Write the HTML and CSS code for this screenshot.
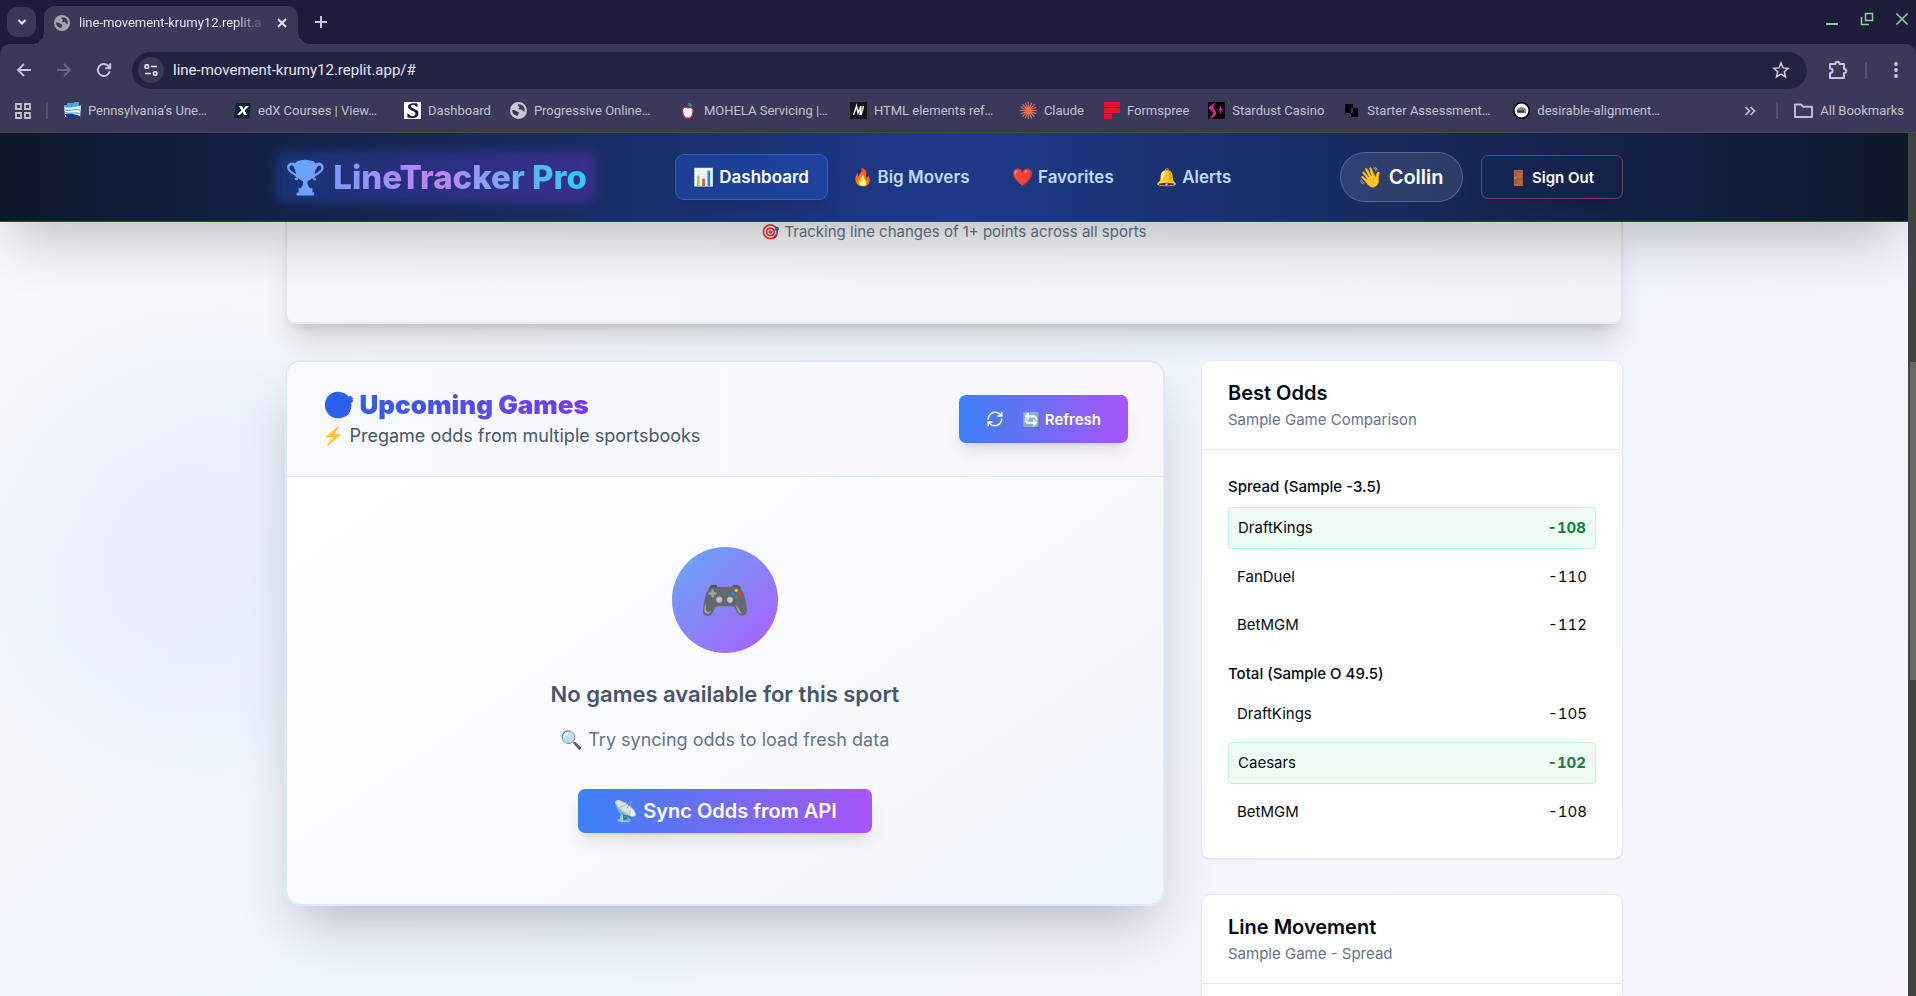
FILE: index.html
```html
<!DOCTYPE html>
<html lang="en">
<head>
<meta charset="utf-8">
<title>LineTracker Pro</title>
<link rel="stylesheet" href="styles.css">
</head>
<body>
<svg class="defs" aria-hidden="true">
  <symbol id="globe" viewBox="0 0 16 16"><circle cx="8" cy="8" r="8" fill="currentColor"/><path d="M2 7.500c2-.3 3.200.3 4.300 1.200 1 .7 2 .3 2 1.600 0 1-.8 1.200-1 2.700-3.200-.2-5.400-2.500-5.300-5.500zM8 2.200c-1 .8-.6 1.800.4 2 1.200.1.800 1.200 0 1.500-.9.400-.4 1.400.8 1.300 1.700-.2 2.600.4 2.900 1.300.3.700 1 .8 1.700.5C14.300 5 11.800 2 8 2.200z" fill="#3a3959"/></symbol>
</svg>
<header class="browser">
  <div class="tabstrip">
    <button class="tab-search" aria-label="Search tabs"><svg width="10" height="8" viewBox="0 0 10 8"><path d="M1.500 2 5 5.500 8.500 2" fill="none" stroke="#e4e3f5" stroke-width="2"/></svg></button>
    <div class="tab">
      <svg class="fav" width="16" height="16"><use href="#globe"/></svg>
      <span class="tab-title">line-movement-krumy12.replit.a</span>
      <button class="icon-btn" aria-label="Close tab"><svg width="10" height="10" viewBox="0 0 10 10"><path d="M1 1l8 8M9 1l-8 8" stroke="#e6e5f5" stroke-width="2"/></svg></button>
    </div>
    <button class="icon-btn new-tab" aria-label="New tab"><svg width="12" height="12" viewBox="0 0 12 12"><path d="M6 0v12M0 6h12" stroke="#c6c3ee" stroke-width="2"/></svg></button>
    <div class="window-controls">
      <button class="icon-btn" aria-label="Minimize"><svg width="14" height="14" viewBox="0 0 14 14"><path d="M1 12h12" stroke="#8fd19a" stroke-width="2"/></svg></button>
      <button class="icon-btn" aria-label="Restore"><svg width="14" height="14" viewBox="0 0 14 14"><path d="M5.500 1.500h7v7h-7zM1.500 5v7.500H9" fill="none" stroke="#8fd19a" stroke-width="1.500"/></svg></button>
      <button class="icon-btn" aria-label="Close"><svg width="14" height="14" viewBox="0 0 14 14"><path d="M1.500 1.500l11 11M12.500 1.500l-11 11" stroke="#8fd19a" stroke-width="1.600"/></svg></button>
    </div>
  </div>
  <div class="toolbar">
    <button class="icon-btn" aria-label="Back"><svg width="16" height="14" viewBox="0 0 16 14"><path d="M15 7H2M8 1 2 7l6 6" fill="none" stroke="#c6c3ee" stroke-width="1.800"/></svg></button>
    <button class="icon-btn" aria-label="Forward"><svg width="16" height="14" viewBox="0 0 16 14"><path d="M1 7h13M8 1l6 6-6 6" fill="none" stroke="#6b6a8d" stroke-width="1.800"/></svg></button>
    <button class="icon-btn" aria-label="Reload"><svg width="16" height="16" viewBox="0 0 16 16"><path d="M13.700 9.200A6 6 0 1 1 12.300 4L14 5.800M14.200 1.200v5H9.200" fill="none" stroke="#c6c3ee" stroke-width="1.900"/></svg></button>
    <div class="omnibox">
      <button class="site-info" aria-label="Site information"><svg width="14" height="12" viewBox="0 0 14 12"><g fill="none" stroke="#e4e3f5" stroke-width="1.600"><circle cx="2.800" cy="2.500" r="1.800"/><path d="M7 2.500h6M1 9.500h6"/><circle cx="11.200" cy="9.500" r="1.800"/></g></svg></button>
      <input class="url" type="text" aria-label="Address" value="line-movement-krumy12.replit.app/#">
      <button class="icon-btn" aria-label="Bookmark"><svg width="18" height="18" viewBox="0 0 18 18"><path d="M9 2l2 4.900 5.200.4-4 3.400 1.300 5.200L9 13.100l-4.500 2.800 1.300-5.200-4-3.400 5.200-.4z" fill="none" stroke="#d3d2e4" stroke-width="1.500"/></svg></button>
    </div>
    <button class="icon-btn" aria-label="Extensions"><svg width="20" height="20" viewBox="0 0 20 20"><path d="M2 4h5.500c0-3 4-3 4 0H16v5c3 0 3 4 0 4v5H2v-5c3.500 0 3.500-4.500 0-4.500z" fill="none" stroke="#c6c3ee" stroke-width="2" stroke-linejoin="round"/></svg></button>
    <span class="divider"></span>
    <button class="icon-btn" aria-label="Menu"><svg width="6" height="16" viewBox="0 0 6 16"><g fill="#c6c3ee"><circle cx="3" cy="2" r="1.900"/><circle cx="3" cy="8" r="1.900"/><circle cx="3" cy="14" r="1.900"/></g></svg></button>
  </div>
  <nav class="bookmarks" aria-label="Bookmarks">
    <button class="icon-btn apps" aria-label="Apps"><svg width="16" height="16" viewBox="0 0 16 16"><path d="M1 1h5v5H1zM10 1h5v5h-5zM1 10h5v5H1zM10 10h5v5h-5z" fill="none" stroke="#c3c2cf" stroke-width="1.800"/></svg></button>
    <span class="divider"></span>
    <a class="bm bm-long" href="#"><svg width="17" height="17" viewBox="0 0 17 17"><path d="M0 3h3V1h7V0h5v3h2l-1 14-5-1-10-1z" fill="#e9f3fb"/><path d="M0 3h3V1h7V0h5v3h2v1C11 4 6 7 0 5z" fill="#4aa3e0"/><path d="M1 8c5 2 9-2 15 0M1 10.500c5 2 9-1 15 1" stroke="#4f9cd6" fill="none"/><path d="M1 12c4 0 7-1 15 2v3L3 16z" fill="#173a86"/></svg><span>Pennsylvania’s Une…</span></a>
    <a class="bm bm-long" href="#"><svg width="17" height="17" viewBox="0 0 17 17"><path d="M2 1h15l-2 15H0z" fill="#02262b"/><path d="M5 4h3l1.200 3L12 4h3l-4.500 4.600L13 13h-3l-1.400-3L6 13H3l4.400-4.800z" fill="#fff"/></svg><span>edX Courses | View…</span></a>
    <a class="bm" href="#"><svg width="17" height="17" viewBox="0 0 17 17"><path d="M0 0h17v17H0z" fill="#fff"/><path d="M13.500 5V1.500c-5-1-9.500 0-9.500 3.300 0 4 7.500 3.500 7.500 7 0 2.800-4 3-5.500 1.400L3.500 11v4.500c6 1.200 11 .3 11-4.300 0-4.700-7.500-4.200-7.500-6.700C7 2.500 10 2.200 11.500 4z" fill="#1b1250"/></svg><span>Dashboard</span></a>
    <a class="bm bm-long" href="#"><svg class="fav-light" width="17" height="17"><use href="#globe"/></svg><span>Progressive Online…</span></a>
    <a class="bm bm-long" href="#"><svg width="17" height="17" viewBox="0 0 17 17"><path d="M8 6c-3-2-6-.5-5.500 3.500C3 13.500 5 17 8 15.800c3 1.200 4.600-2 5-6C13.200 6 11 4.500 8 6z" fill="#fff" stroke="#c32148" stroke-width="1.300"/><path d="M8 1.500c2-1 3.500.5 3.500 2C9.500 4.500 8.300 3.500 8 1.500zM9 5l4-1.500" fill="#1f9a75" stroke="#1f9a75"/></svg><span>MOHELA Servicing |…</span></a>
    <a class="bm bm-long" href="#"><svg width="17" height="17" viewBox="0 0 17 17"><path d="M0 0h17v17H0z" fill="#15141a"/><path d="M3.500 13 6.500 4 8 11l3-7-1 9M11 13l2.500-9" fill="none" stroke="#fff" stroke-width="1.400"/></svg><span>HTML elements ref…</span></a>
    <a class="bm" href="#"><svg width="17" height="17" viewBox="0 0 17 17"><path d="M8.500 0v17M0 8.500h17M2.500 2.500l12 12M14.500 2.500l-12 12M5.300.8l6.400 15.400M.8 11.700l15.400-6.400M11.700.8 5.300 16.200M.8 5.300l15.400 6.400" stroke="#d97757" stroke-width="1.200"/></svg><span>Claude</span></a>
    <a class="bm" href="#"><svg width="17" height="17" viewBox="0 0 17 17"><path d="M1 0h16v5H1zM1 6h16v5H1zM1 12h8v5H1z" fill="#e5122e"/></svg><span>Formspree</span></a>
    <a class="bm" href="#"><svg width="17" height="17" viewBox="0 0 17 17"><path d="M0 0h17v17H0z" fill="#000"/><path d="M8 0C4 3 1 4 1 6s4 3 4 5-2 4-4 6c4-1 7-3 7-6S4 7 5 5s2-3 3-5zM12.500 3l.8 4 3 .8-3 .8-.8 4.400-.8-4.400-3-.8 3-.8z" fill="#e0269b"/></svg><span>Stardust Casino</span></a>
    <a class="bm bm-long" href="#"><svg width="17" height="17" viewBox="0 0 17 17"><path d="M2 2h8v4h5v9H8v-4H2z" fill="#000"/><path d="M8 6h2v5H8z" fill="#3a3959"/></svg><span>Starter Assessment…</span></a>
    <a class="bm bm-long" href="#"><svg width="17" height="17" viewBox="0 0 17 17"><circle cx="8.500" cy="8.500" r="7.700" fill="#fff" stroke="#000" stroke-width="1.600"/><path d="M4 8c1-4 8-4 9 0v3H4z" fill="#888"/><path d="M4 8.500h7v2H4z" fill="#333"/></svg><span>desirable-alignment…</span></a>
    <button class="icon-btn more" aria-label="More bookmarks"><svg width="12" height="10" viewBox="0 0 12 10"><path d="M1.500 1l4 4-4 4M6.500 1l4 4-4 4" fill="none" stroke="#c3c2cf" stroke-width="1.700"/></svg></button>
    <span class="divider"></span>
    <a class="bm all" href="#"><svg width="19" height="15" viewBox="0 0 19 15"><path d="M1 1.500h6l2 2.200h9V14H1z" fill="none" stroke="#c3c2cf" stroke-width="1.900" stroke-linejoin="round"/></svg><span>All Bookmarks</span></a>
  </nav>
</header>

<div class="viewport">
  <div class="page">
    <header class="site-header">
      <div class="container header-row">
        <a class="logo" href="#"><span class="logo-text">🏆 LineTracker Pro</span></a>
        <nav class="site-nav" aria-label="Main">
          <a class="nav-link active" href="#">📊 Dashboard</a>
          <a class="nav-link" href="#">🔥 Big Movers</a>
          <a class="nav-link" href="#">❤️ Favorites</a>
          <a class="nav-link" href="#">🔔 Alerts</a>
        </nav>
        <div class="account">
          <span class="user">👋 Collin</span>
          <button class="sign-out">🚪 Sign Out</button>
        </div>
      </div>
    </header>
    <main class="container main">
      <section class="hero"><p>🎯 Tracking line changes of 1+ points across all sports</p></section>
      <div class="columns">
        <section class="games">
          <div class="games-head">
            <div>
              <h2 class="games-title">🎯 Upcoming Games</h2>
              <p class="games-sub">⚡ Pregame odds from multiple sportsbooks</p>
            </div>
            <button class="btn refresh">
              <svg width="18" height="18" viewBox="0 0 24 24" fill="none" stroke="#fff" stroke-width="2" stroke-linecap="round" stroke-linejoin="round"><path d="M3 12a9 9 0 0 1 9-9 9.750 9.750 0 0 1 6.740 2.740L21 8"/><path d="M21 3v5h-5"/><path d="M21 12a9 9 0 0 1-9 9 9.750 9.750 0 0 1-6.740-2.740L3 16"/><path d="M8 16H3v5"/></svg>
              <span>🔄 Refresh</span>
            </button>
          </div>
          <div class="empty">
            <div class="empty-icon"><span>🎮</span></div>
            <h3>No games available for this sport</h3>
            <p>🔍 Try syncing odds to load fresh data</p>
            <button class="btn sync">📡 Sync Odds from API</button>
          </div>
        </section>
        <aside class="side">
          <section class="card">
            <div class="card-head"><h3>Best Odds</h3><p>Sample Game Comparison</p></div>
            <div class="card-body">
              <div class="market">
                <h4>Spread (Sample -3.5)</h4>
                <dl>
                  <div class="odd best"><dt>DraftKings</dt><dd>-108</dd></div>
                  <div class="odd"><dt>FanDuel</dt><dd>-110</dd></div>
                  <div class="odd"><dt>BetMGM</dt><dd>-112</dd></div>
                </dl>
              </div>
              <div class="market">
                <h4>Total (Sample O 49.5)</h4>
                <dl>
                  <div class="odd"><dt>DraftKings</dt><dd>-105</dd></div>
                  <div class="odd best"><dt>Caesars</dt><dd>-102</dd></div>
                  <div class="odd"><dt>BetMGM</dt><dd>-108</dd></div>
                </dl>
              </div>
            </div>
          </section>
          <section class="card">
            <div class="card-head"><h3>Line Movement</h3><p>Sample Game - Spread</p></div>
            <div class="card-body chart"></div>
          </section>
        </aside>
      </div>
    </main>
  </div>
  <div class="scrollbar"><div class="thumb"></div></div>
</div>
</body>
</html>
```
FILE: styles.css
```css
* { box-sizing: border-box; }
body, h2, h3, h4, p, dl, dd { margin: 0; }
button, input { font: inherit; border: 0; background: none; padding: 0; color: inherit; }
a { color: inherit; text-decoration: none; }
svg { display: block; flex: none; }
.defs { position: absolute; width: 0; height: 0; }

body {
  display: flex;
  flex-direction: column;
  height: 100vh;
  overflow: hidden;
  font-family: Inter, "Noto Color Emoji", sans-serif;
  color: #020817;
}

/* Browser window */
.browser {
  flex: none;
  background: #1d1d3b;
  font-family: Roboto, sans-serif;
  border-bottom: 1px solid #424a4c;
}
.icon-btn { display: grid; place-items: center; flex: none; }
.tabstrip { display: flex; align-items: flex-end; height: 44px; padding: 0 7px; }
.tab-search {
  display: grid; place-items: center;
  width: 29px; height: 30px; margin-bottom: 7px;
  border-radius: 10px; background: #393856;
}
.tab {
  position: relative;
  display: flex; align-items: center;
  width: 254px; height: 38px; margin-left: 8px; padding: 0 11px 4px 10px;
  border-radius: 11px 11px 0 0; background: #3a3959;
}
.tab::before, .tab::after {
  content: ""; position: absolute; bottom: 0; width: 12px; height: 12px;
}
.tab::before { left: -12px; background: radial-gradient(circle at 0 0, transparent 12px, #3a3959 12px); }
.tab::after { right: -12px; background: radial-gradient(circle at 100% 0, transparent 12px, #3a3959 12px); }
.fav { color: #a3a5ad; }
.fav-light { color: #c8cad2; }
.tab-title {
  flex: 1; margin: 0 8px 0 9px; white-space: nowrap;
  font-size: 13px; line-height: 18px; color: #e4e3f3;
  mask-image: linear-gradient(90deg, #000 82%, transparent 98%);
}
.new-tab { width: 30px; height: 30px; margin: 0 0 7px 8px; }
.window-controls { display: flex; gap: 21px; margin: 0 0 18px auto; }

.toolbar {
  display: flex; align-items: center;
  height: 52px; padding: 0 17px 0 16px;
  background: #3a3959; border-radius: 10px 10px 0 0;
}
.toolbar > .icon-btn { margin-right: 24px; }
.toolbar > .icon-btn:last-child { margin: 0; }
.omnibox {
  display: flex; align-items: center; flex: 1;
  height: 37px; margin: 0 21px 0 -4px; padding: 0 17px 0 6px;
  border-radius: 19px; background: #222342;
}
.site-info {
  display: grid; place-items: center; flex: none;
  width: 26px; height: 26px; border-radius: 50%; background: #393856;
}
.url { flex: 1; min-width: 0; margin-left: 9px; font-size: 15px; line-height: 20px; color: #e6e5f5; }
.divider { flex: none; width: 2px; height: 17px; background: #514f74; }
.toolbar > .icon-btn:nth-last-child(3) { margin-right: 17px; }
.toolbar > .divider { margin-right: 26px; }

.bookmarks {
  display: flex; align-items: center;
  height: 36px; padding: 0 12px 7px 15px;
  background: #3a3959; font-size: 13px; line-height: 20px; color: #c3c2cf;
}
.apps { margin-right: 15px; }
.bm { display: flex; align-items: center; gap: 7px; margin-right: 19px; white-space: nowrap; }
.bookmarks > .divider + .bm { margin-left: 16px; }
.bm-long span { width: 127px; }
.more { margin: 0 20px 0 auto; }
.bookmarks > .all { margin-right: 0; }

/* Page */
.viewport { display: flex; flex: 1; min-height: 0; }
.page {
  flex: 1; min-width: 0; overflow: hidden;
  background:
    radial-gradient(circle 260px at 190px 420px, rgba(129, 130, 240, .09), rgba(110, 150, 250, .06) 60%, transparent),
    linear-gradient(135deg, #f8fafc, #eff6ff 50%, #f7f4ff);
}
.scrollbar { flex: none; width: 8px; padding: 229px 0 0 2px; background: #424242; }
.thumb { height: 318px; background: #686868; }
.container { max-width: 1408px; margin: 0 auto; padding: 0 35px; }

.site-header {
  position: relative; z-index: 2;
  background: linear-gradient(90deg, #0f172a, #1e3a8a 50%, #0f172a);
  border-bottom: 1px solid #1f4287;
  box-shadow: 0 28px 55px -13px rgba(0, 0, 0, .25);
}
.header-row { display: flex; align-items: center; height: 88px; }
.logo { position: relative; margin-right: 88px; white-space: nowrap; }
.logo::before {
  content: ""; position: absolute; inset: -4px -9px;
  background: linear-gradient(90deg, #2563eb, #9333ea);
  border-radius: 9px; opacity: .28; filter: blur(5px);
}
.logo-text {
  position: relative; display: block;
  font-size: 33px; line-height: 44px; font-weight: 800;
  background: linear-gradient(90deg, #60a5fa, #c084fc 50%, #22d3ee);
  background-clip: text; color: transparent;
}
.site-nav { display: flex; gap: 5px; }
.nav-link {
  padding: 11px 18px; border: 1px solid transparent; border-radius: 9px;
  font-size: 17px; line-height: 22px; font-weight: 600; color: #bfdbfe; white-space: nowrap;
}
.nav-link.active {
  color: #fff; background: rgba(37, 99, 235, .3); border-color: rgba(59, 130, 246, .5);
  box-shadow: 0 11px 17px -3px rgba(0, 0, 0, .1);
}
.account { display: flex; align-items: center; gap: 18px; margin-left: auto; white-space: nowrap; }
.user {
  padding: 9px 18px; border: 1px solid rgba(255, 255, 255, .2); border-radius: 25px;
  background: rgba(255, 255, 255, .1); font-size: 20px; line-height: 30px; font-weight: 600; color: #fff;
}
.sign-out {
  height: 44px; padding: 0 28px; border: 1px solid rgba(248, 113, 113, .4); border-radius: 7px;
  font-size: 15px; font-weight: 600; color: #fff;
  box-shadow: 0 11px 17px -3px rgba(0, 0, 0, .1);
}

.hero {
  display: flex; justify-content: center;
  height: 102px; border: 2px solid #e2e8f0; border-top: 0; border-radius: 0 0 9px 9px;
  background: linear-gradient(100deg, #f7fafb, #f1f5f9);
  box-shadow: 0 22px 28px -6px rgba(0, 0, 0, .14), 0 9px 11px -7px rgba(0, 0, 0, .12);
  font-size: 15px; line-height: 20px; color: #64748b;
}
.columns { display: grid; grid-template-columns: minmax(0, 880fr) minmax(0, 422fr); gap: 36px; align-items: start; padding-top: 36px; }

.games {
  overflow: hidden; border: 2px solid #dbeafe; border-radius: 16px;
  background: linear-gradient(145deg, #fff, #f8fafc 60%, #eff6ff);
  box-shadow: 0 28px 55px -13px rgba(0, 0, 0, .25);
}
.games-head {
  display: flex; justify-content: space-between; align-items: center;
  padding: 26px 35px; min-height: 115px; border-bottom: 1px solid #dbeafe;
  background: linear-gradient(90deg, #f7faff, #faf7ff);
}
.games-title {
  width: fit-content; font-size: 26px; line-height: 32px; font-weight: 900;
  background: linear-gradient(90deg, #2563eb, #7c3aed);
  background-clip: text; color: transparent;
}
.games-sub { font-size: 18px; line-height: 29px; font-weight: 400; color: #475569; }
.btn {
  display: flex; align-items: center; justify-content: center; border-radius: 7px;
  background: linear-gradient(90deg, #3b82f6, #a855f7); color: #fff; font-weight: 600; white-space: nowrap;
  box-shadow: 0 11px 17px -3px rgba(0, 0, 0, .1), 0 4px 7px -4px rgba(0, 0, 0, .1);
}
.refresh { height: 48px; padding: 0 27px; gap: 18px; font-size: 15px; }
.empty { display: flex; flex-direction: column; align-items: center; padding: 70px 35px 71px; }
.empty-icon {
  display: grid; place-items: center; width: 106px; height: 106px; margin-bottom: 26px;
  border-radius: 50%; background: linear-gradient(135deg, #60a5fa, #a855f7); opacity: .95;
}
.empty-icon span { font-size: 40px; line-height: 44px; }
.empty h3 { font-size: 22px; line-height: 31px; font-weight: 600; color: #475569; }
.empty p { margin: 16px 0 35px; font-size: 18px; line-height: 28px; color: #64748b; }
.sync { height: 44px; padding: 0 35px; font-size: 20px; }

.side { display: grid; gap: 35px; }
.card { border: 1px solid #e2e8f0; border-radius: 9px; background: #fff; box-shadow: 0 1px 2px rgba(0, 0, 0, .05); }
.card-head { padding: 18px 26px; border-bottom: 1px solid #e2e8f0; }
.card-head h3 { font-size: 20px; line-height: 29px; font-weight: 600; }
.card-head p { font-size: 15px; line-height: 23px; color: #64748b; }
.card-body { display: grid; gap: 18px; padding: 26px; font-size: 15px; line-height: 22px; }
.chart { min-height: 220px; }
.market h4 { margin-bottom: 9px; font-size: 15px; font-weight: 500; }
.market dl { display: grid; gap: 8px; }
.odd { display: flex; justify-content: space-between; padding: 9px; border-radius: 4px; }
.odd.best { border: 1px solid #bbf7d0; background: #f0fdf4; }
.odd dd { font-weight: 400; font-variant-numeric: tabular-nums; }
.odd.best dd { font-weight: 700; color: #15803d; }
```
